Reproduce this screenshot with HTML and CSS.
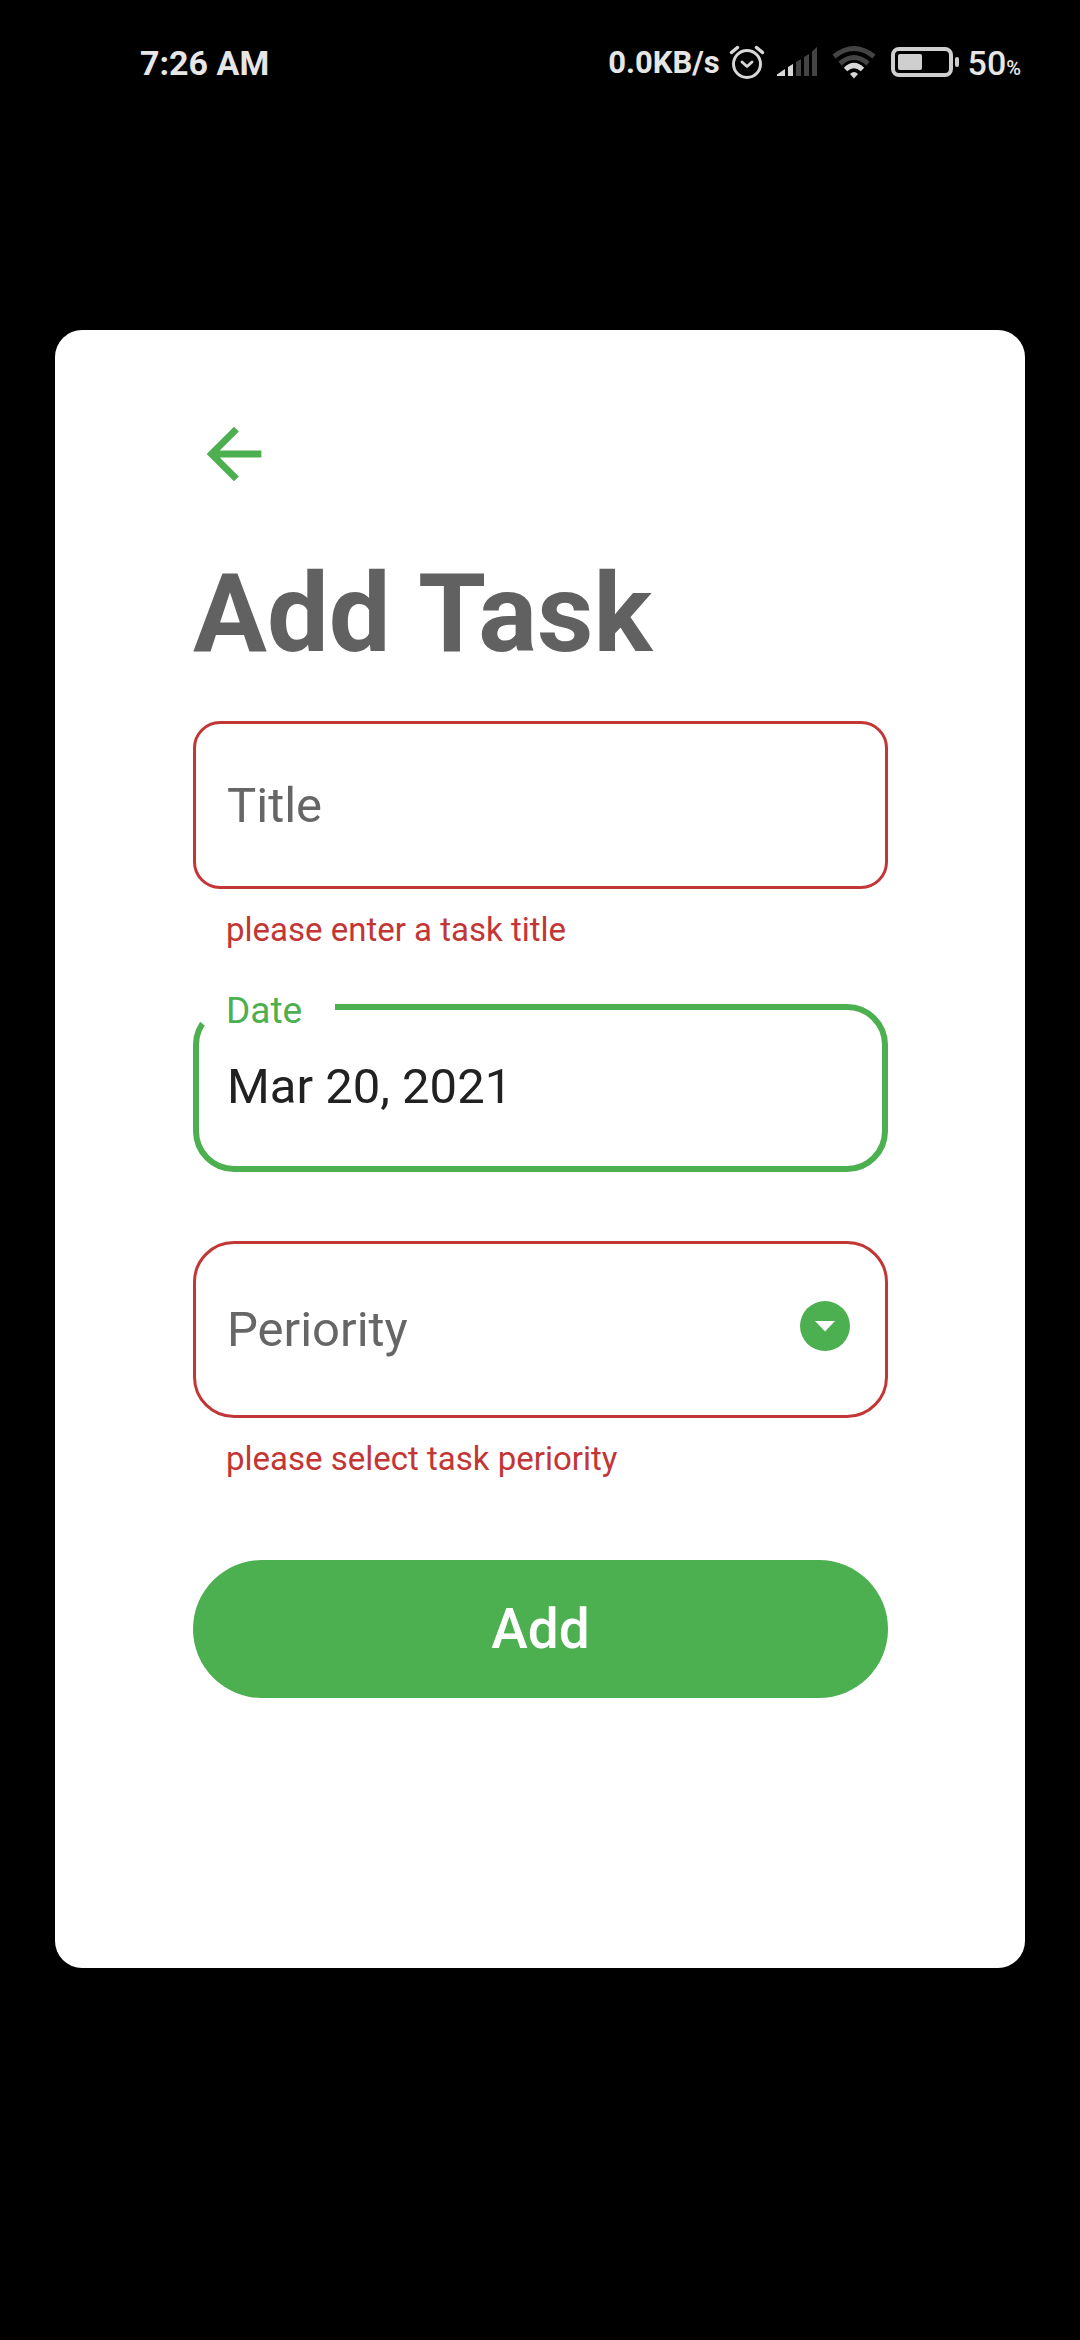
FILE: index.html
```html
<!DOCTYPE html>
<html lang="en">
<head>
<meta charset="utf-8">
<meta name="viewport" content="width=device-width, initial-scale=1">
<title>Add Task</title>
<link rel="stylesheet" href="styles.css">
</head>
<body>
<header class="status-bar">
  <time class="clock">7:26 AM</time>
  <div class="indicators">
    <span class="net-speed">0.0KB/s</span>
    <svg class="alarm" width="38" height="36" viewBox="0 0 38 36" fill="none" stroke="#d8d8d8" stroke-width="3" stroke-linecap="round" stroke-linejoin="round" aria-hidden="true">
      <circle cx="19" cy="20" r="13.5"/>
      <path d="M14 18l5 4.500 5-4.500" stroke-width="2.800"/>
      <path d="M3.500 8.500L9.500 3.500M34.500 8.500L28.500 3.500" stroke-width="3.500"/>
    </svg>
    <svg class="signal" width="40" height="36" viewBox="0 0 40 36" aria-hidden="true">
      <path d="M0 30.500L8 25v7H0zM11 23l5-3v12h-5z" fill="#d8d8d8"/>
      <path d="M19 18l5-3v17h-5zM27 13l5-3v22h-5zM35 7.500L40 3v29h-5z" fill="#444"/>
    </svg>
    <svg class="wifi" width="44" height="36" viewBox="0 0 44 36" fill="none" stroke-width="5" aria-hidden="true">
      <path d="M2 12.500Q22-3.500 42 12.500" stroke="#444"/>
      <path d="M8 19.500Q22 7.500 36 19.500" stroke="#444"/>
      <path d="M13.500 25.500Q22 17.500 30.500 25.500" stroke="#d8d8d8"/>
      <path d="M18 30q4-4 8 0l-4 4.500z" fill="#d8d8d8" stroke="none"/>
    </svg>
    <svg class="battery" width="70" height="36" viewBox="0 0 70 36" aria-hidden="true">
      <rect x="2" y="5" width="58" height="26" rx="6" fill="none" stroke="#cfcfcf" stroke-width="4"/>
      <rect x="7" y="10" width="24" height="16" rx="2" fill="#cfcfcf"/>
      <rect x="64" y="13" width="4" height="10" rx="2" fill="#cfcfcf"/>
    </svg>
    <span class="charge">50<span class="percent">%</span></span>
  </div>
</header>

<main class="card">
  <button class="back" type="button" aria-label="Back">
    <svg width="82" height="82" viewBox="0 0 24 24" fill="#4caf50" aria-hidden="true"><path d="M20 11H7.830l5.590-5.590L12 4l-8 8 8 8 1.410-1.410L7.830 13H20v-2z"/></svg>
  </button>
  <h1 class="heading"><span class="word">Add</span> <span class="word">Task</span></h1>

  <form class="form" novalidate>
    <input class="field title-field" type="text" placeholder="Title" aria-label="Title" aria-invalid="true" aria-describedby="title-error">
    <p class="error" id="title-error">please enter a task title</p>

    <div class="date-group">
      <input class="field date-field" id="date" type="text" value="Mar 20, 2021">
      <label class="floating-label" for="date">Date</label>
    </div>

    <div class="select-group">
      <select class="field select-field" aria-label="Periority" aria-invalid="true" aria-describedby="periority-error">
        <option>Periority</option>
      </select>
      <svg class="drop-icon" width="50" height="50" viewBox="0 0 50 50" aria-hidden="true">
        <circle cx="25" cy="25" r="25" fill="#4caf50"/>
        <path d="M15 20h20L25 30.500z" fill="#fff"/>
      </svg>
    </div>
    <p class="error" id="periority-error">please select task periority</p>

    <button class="submit" type="submit">Add</button>
  </form>
</main>
</body>
</html>
```
FILE: styles.css
```css
* {
  box-sizing: border-box;
}

body {
  margin: 0;
  background: #000;
  font-family: Roboto, "Liberation Sans", sans-serif;
}

/* Status bar */
.status-bar {
  display: flex;
  justify-content: space-between;
  align-items: center;
  padding: 44px 59px 0 140px;
  color: #e6e6e6;
  line-height: 38px;
}

.clock {
  font-size: 34px;
  font-weight: 700;
}

.indicators {
  display: flex;
  align-items: flex-start;
}

.net-speed {
  font-size: 31px;
  font-weight: 700;
  margin-right: 8px;
}

.alarm {
  margin-right: 11px;
}

.signal,
.wifi {
  margin-right: 15px;
}

.battery {
  margin-right: 7px;
}

.charge {
  font-size: 34px;
  font-weight: 500;
}

.percent {
  font-size: 20px;
  line-height: 20px;
}

/* Card */
.card {
  margin: 248px 55px 0;
  padding: 83px 137px 270px 138px;
  border-radius: 27px;
  background: #fff;
}

.back {
  display: block;
  padding: 0;
  border: 0;
  background: none;
}

.back svg {
  display: block;
}

.heading {
  margin: 55px 0 43px;
  color: #616161;
  font-size: 110px;
  font-weight: 700;
  line-height: 128px;
}

.word {
  display: inline-block;
}

/* Form */
.form {
  display: flex;
  flex-direction: column;
}

.field {
  display: block;
  width: 100%;
  height: 168px;
  margin: 0;
  padding: 0 31px;
  border: 3px solid #c23636;
  border-radius: 41px;
  outline: 0;
  appearance: none;
  background: #fff;
  color: #212121;
  font-family: inherit;
  font-size: 49px;
}

.field::placeholder {
  color: #666;
  opacity: 1;
}

.title-field {
  border-radius: 27px;
}

.error {
  margin: 22px 33px 0;
  color: #c23636;
  font-size: 33px;
  line-height: 38px;
}

.date-group,
.select-group {
  position: relative;
}

.date-group {
  margin: 55px 0 69px;
}

.date-field {
  padding: 0 28px 4px;
  border: 6px solid #4caf50;
}

.floating-label {
  position: absolute;
  top: -15px;
  left: 0;
  padding: 0 33px;
  color: #4caf50;
  font-size: 37px;
  line-height: 44px;
  isolation: isolate;
}

/* Opens the outline behind the label, ending on the rounded corner */
.floating-label::before {
  content: "";
  position: absolute;
  inset: 10px 0 4px;
  z-index: -1;
  background: #fff;
  clip-path: polygon(0 0, 100% 0, 100% 100%, 16px 100%, 0 17px);
}

.select-field {
  height: 177px;
  color: #666;
}

.drop-icon {
  position: absolute;
  top: 60px;
  right: 38px;
  pointer-events: none;
}

.submit {
  height: 138px;
  margin-top: 82px;
  padding: 0;
  border: 0;
  border-radius: 69px;
  background: #4caf50;
  color: #fff;
  font-family: inherit;
  font-size: 55px;
  font-weight: 500;
}
```
